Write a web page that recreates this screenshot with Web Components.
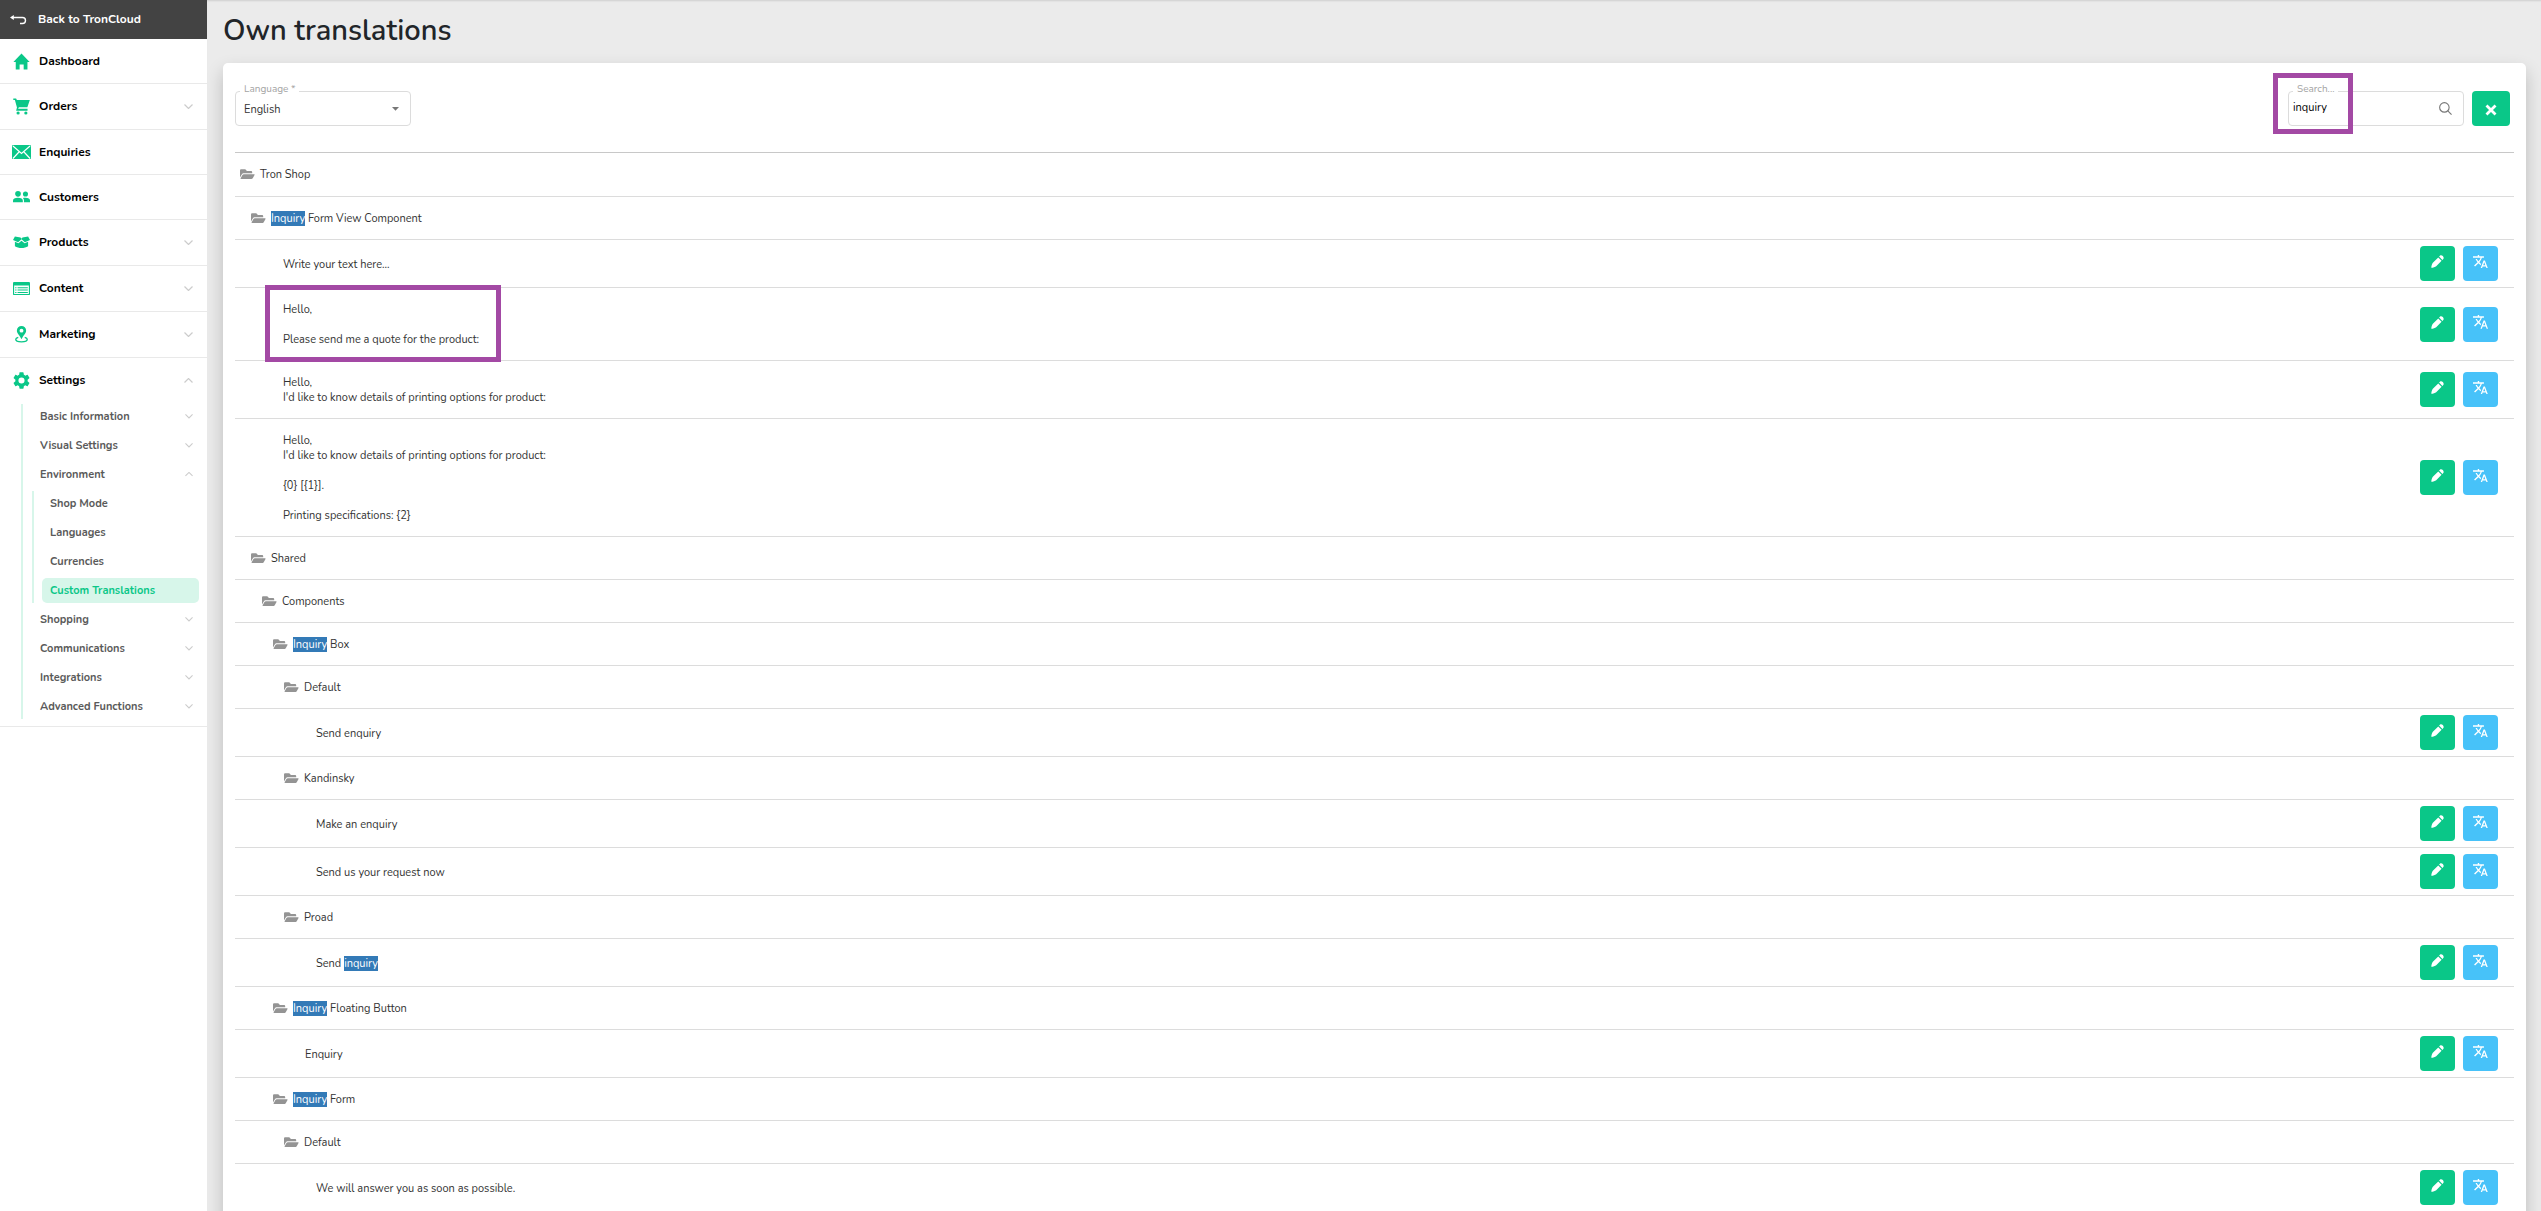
<!DOCTYPE html>
<html lang="en">
<head>
<meta charset="utf-8">
<title>Own translations</title>
<style>
	html, body {
		height: 100%;
		margin: 0;
	}
	body {
		--green: #0ac788;
		--mint: #d7f6ea;
		--blue: #47c2f9;
		--line: #dcdcdc;
		--mark: #a349a4;
		background: #ebebeb;
		color: #333;
		font: 11px/15px Nunito, "Open Sans", sans-serif;
	}
</style>
</head>
<body>
<app-shell>
	<side-nav slot="nav"></side-nav>
	<h1 slot="title">Own translations</h1>
	<filter-bar></filter-bar>
	<translation-table></translation-table>
</app-shell>

<script>
const icons = {
	back: ['0 0 17 10', '<path d="M3 2.5h9.5a3 3 0 0 1 0 6H10" fill="none" stroke="currentColor" stroke-width="1.4"/><path d="M0 2.5 3.8 0v5z"/>'],
	home: ['0 0 18 18', '<path d="M9 .5 17.6 9.6h-2.3v8h-4v-5.4H7v5.4H2.9v-8H.4z"/>'],
	cart: ['0 0 18 18', '<path d="M.3.4h3l.8 1.8h13.7l-2.6 7.6H6.3l-.9 1.7h10v1.9H3.3l.9-3.4L2 2.1H.3z"/><circle cx="5.4" cy="15.9" r="1.7"/><circle cx="13.6" cy="15.9" r="1.7"/>'],
	mail: ['0 0 20 15', '<rect width="20" height="15" rx="1.2"/><path d="m1 1 9 8 9-8M1 14.2l6.6-7.1M19 14.2l-6.6-7.1" fill="none" stroke="#fff" stroke-width="1.2"/>'],
	people: ['0 0 18 12', '<circle cx="5.3" cy="3" r="3"/><circle cx="13.2" cy="3.2" r="2.7"/><path d="M0 12v-1.8C0 8 2 7.1 5.2 7.1s5.2.9 5.2 3.1V12zM11.6 12v-2c0-1.2-.5-2-1.2-2.6.8-.2 1.7-.3 2.8-.3 3 0 4.800.9 4.800 2.900V12z"/>'],
	box: ['0 0 18 13', '<path d="M2 .5 8 1.500 9 2.800l1-1.300 6-1L18 4.300l-5.400 2.200L9 3.400 5.400 6.500 0 4.300z"/><path d="M2 6.200l3.800 1.600L9 5l3.200 2.800L16 6.200v4.700c-2 1.300-4.400 1.900-7 1.900s-5-.6-7-1.900z"/>'],
	content: ['0 0 18 14', '<rect x=".6" y=".6" width="16.800" height="12.800" rx=".8" fill="none" stroke="currentColor" stroke-width="1.2"/><path d="M.6.6h16.800v3H.6zM2.300 5.500h1.400v1.100H2.300zm2.500 0h10.900v1.100H4.800zM2.300 8h1.400v1.100H2.300zm2.500 0h10.900v1.100H4.800zm-2.500 2.500h1.400v1.100H2.300zm2.500 0h10.900v1.100H4.800z"/>'],
	pin: ['0 0 14 18', '<path d="M7 0a5 5 0 0 0-5 5c0 3.300 3.600 5.300 5 9.400C8.400 10.300 12 8.300 12 5a5 5 0 0 0-5-5zm0 2.900a2.100 2.100 0 1 1 0 4.200 2.100 2.100 0 0 1 0-4.200z"/><path d="M3.500 12.200C1.800 12.700.8 13.500.8 14.300c0 1.500 2.800 2.800 6.200 2.800s6.200-1.300 6.200-2.800c0-.8-1-1.600-2.700-2.100" fill="none" stroke="currentColor" stroke-width="1.400"/>'],
	gear: ['2 2 20 20', '<path d="M19.140 12.940c.04-.3.06-.61.06-.94 0-.32-.02-.64-.07-.94l2.030-1.580a.49.49 0 0 0 .12-.61l-1.920-3.320a.488.488 0 0 0-.59-.22l-2.390.96c-.5-.38-1.030-.7-1.620-.94l-.36-2.540a.484.484 0 0 0-.48-.41h-3.840c-.24 0-.43.17-.47.41l-.36 2.540c-.59.24-1.130.57-1.620.94l-2.390-.96c-.22-.08-.47 0-.59.22L2.740 8.870c-.12.21-.08.47.12.61l2.030 1.580c-.05.3-.09.63-.09.94s.02.64.07.94l-2.030 1.580a.49.49 0 0 0-.12.61l1.920 3.320c.12.22.37.29.59.22l2.390-.96c.5.38 1.030.7 1.620.94l.36 2.540c.05.24.24.41.48.41h3.840c.24 0 .44-.17.47-.41l.36-2.540c.59-.24 1.130-.56 1.620-.94l2.390.96c.22.08.47 0 .59-.22l1.920-3.320c.12-.22.07-.47-.12-.61l-2.010-1.580zM12 15.600A3.610 3.610 0 0 1 8.400 12 3.610 3.610 0 0 1 12 8.400a3.610 3.610 0 0 1 3.600 3.600 3.610 3.610 0 0 1-3.600 3.600z"/>'],
	down: ['0 0 9 5', '<path d="M.5.5l4 4 4-4" fill="none" stroke="currentColor" stroke-width="1.200"/>'],
	up: ['0 0 9 5', '<path d="M.5 4.500l4-4 4 4" fill="none" stroke="currentColor" stroke-width="1.200"/>'],
	caret: ['0 0 7 4', '<path d="M0 0h7L3.500 3.800z"/>'],
	search: ['0 0 14 14', '<circle cx="5.800" cy="5.800" r="5.100" fill="none" stroke="currentColor" stroke-width="1.200"/><path d="m9.500 9.500 4 4" stroke="currentColor" stroke-width="1.200"/>'],
	close: ['0 0 12 12', '<path d="M1.500 1.500l9 9m0-9-9 9" stroke="currentColor" stroke-width="2.800"/>'],
	folder: ['0 52 590 408', '<path d="M572.694 292.093L500.270 416.248A63.997 63.997 0 0 1 444.989 448H45.025c-18.523 0-30.064-20.093-20.731-36.093l72.424-124.155A64 64 0 0 1 152 256h399.964c18.523 0 30.064 20.093 20.730 36.093zM152 224h328v-48c0-26.510-21.490-48-48-48H272l-64-64H48C21.490 64 0 85.490 0 112v278.046l69.077-118.418C86.214 242.250 117.989 224 152 224z"/>'],
	pencil: ['0 0 14 14', '<path d="M7.800 2.600 11.400 6.200 5.600 12C4.500 13 2.300 13.500.3 13.700.5 11.700 1 9.500 2 8.400zM8.700 1.700l.9-.9c1.900-1.700 5.300 1.700 3.600 3.600l-.9.9z"/>'],
	translate: ['1 2 22 20', '<path d="M12.870 15.070l-2.540-2.510.03-.03c1.740-1.940 2.980-4.170 3.710-6.530H17V4h-7V2H8v2H1v1.990h11.170C11.500 7.920 10.440 9.750 9 11.350 8.070 10.320 7.300 9.190 6.690 8h-2c.73 1.630 1.730 3.170 2.980 4.560l-5.090 5.020L4 19l5-5 3.110 3.110.76-2.040zM18.500 10h-2L12 22h2l1.120-3h4.750L21 22h2l-4.500-12zm-2.620 7l1.620-4.330L19.120 17h-3.240z"/>']
}

class UiIcon extends HTMLElement {
	constructor() {
		super()
		this.attachShadow({ mode: 'open' })
	}
	connectedCallback() {
		let [box, shapes] = icons[this.getAttribute('name')]
		let width = this.getAttribute('width')
		this.shadowRoot.innerHTML = /* html */ `
		<style>
			:host {
				display: inline-flex;
				flex: none;
			}
			svg {
				display: block;
				height: auto;
				fill: currentColor;
			}
		</style>
		<svg viewBox="${box}" width="${width}" aria-hidden="true">${shapes}</svg>
		`
	}
}
customElements.define('ui-icon', UiIcon)

class AppShell extends HTMLElement {
	constructor() {
		super()
		this.attachShadow({ mode: 'open' })
		this.shadowRoot.innerHTML = /* html */ `
		<style>
			:host {
				display: grid;
				grid-template-columns: 207px minmax(0, 1fr);
				height: 100vh;
				overflow: hidden;
			}
			main {
				padding: 13px 15px 0 16px;
				overflow: hidden;
				box-shadow: inset 0 2px 2px -1px #cfcfcf;
			}
			::slotted(h1) {
				margin: 0 0 14px;
				color: #212529;
				font-size: 29px;
				font-weight: 600;
				line-height: 36px;
			}
			.card {
				padding: 28px 12px;
				background: #fff;
				border-radius: 5px;
				box-shadow: 0 8px 18px rgba(0, 0, 0, .2);
			}
		</style>
		<slot name="nav"></slot>
		<main>
			<slot name="title"></slot>
			<div class="card"><slot></slot></div>
		</main>
		`
	}
}
customElements.define('app-shell', AppShell)

class NavSection extends HTMLElement {
	constructor() {
		super()
		this.attachShadow({ mode: 'open' })
	}
	connectedCallback() {
		let arrow = this.getAttribute('arrow')
		this.shadowRoot.innerHTML = /* html */ `
		<style>
			:host {
				display: block;
				border-bottom: 1px solid #e9e9e9;
			}
			a {
				display: flex;
				align-items: center;
				gap: 8px;
				height: ${arrow ? 45 : 44}px;
				padding: 0 14px 0 12px;
				color: #000;
				font-size: 12px;
				font-weight: 700;
				text-decoration: none;
			}
			.glyph {
				display: flex;
				justify-content: center;
				width: 19px;
				color: var(--green);
			}
			.label {
				flex: 1;
			}
			.arrow {
				color: #ccc;
			}
		</style>
		<a href="#">
			<span class="glyph"><ui-icon name="${this.getAttribute('icon')}" width="${this.getAttribute('size') || 17}"></ui-icon></span>
			<span class="label">${this.getAttribute('label')}</span>
			${arrow ? `<ui-icon class="arrow" name="${arrow}" width="9"></ui-icon>` : ''}
		</a>
		<slot></slot>
		`
	}
}
customElements.define('nav-section', NavSection)

class SideNav extends HTMLElement {
	constructor() {
		super()
		this.attachShadow({ mode: 'open' })
		let item = (label, arrow) => `<li><a href="#">${label}${arrow ? `<ui-icon name="${arrow}" width="8"></ui-icon>` : ''}</a>`
		this.shadowRoot.innerHTML = /* html */ `
		<style>
			:host {
				display: block;
				background: #fff;
			}
			.back {
				display: flex;
				align-items: center;
				gap: 11px;
				height: 39px;
				padding-left: 10px;
				color: #fff;
				background: #434343;
				font-size: 12px;
				font-weight: 700;
				text-decoration: none;
			}
			ul {
				display: flex;
				flex-direction: column;
				gap: 4px;
				margin: 0;
				padding: 0;
				list-style: none;
				border-left: 2px solid var(--mint);
			}
			.sub {
				margin: 1px 0 7px 21px;
			}
			.sub ul {
				margin: 4px 8px 0 9px;
			}
			li a {
				display: flex;
				align-items: center;
				justify-content: space-between;
				height: 25px;
				padding: 0 14px 0 17px;
				color: #5a5a5a;
				font-weight: 700;
				text-decoration: none;
			}
			li li a {
				margin-left: 8px;
				padding: 0 8px;
			}
			.active a {
				color: var(--green);
				background: var(--mint);
				border-radius: 5px;
			}
			li ui-icon {
				color: #ccc;
			}
		</style>
		<a class="back" href="#"><ui-icon name="back" width="17"></ui-icon>Back to TronCloud</a>
		<nav>
			<nav-section label="Dashboard" icon="home"></nav-section>
			<nav-section label="Orders" icon="cart" arrow="down"></nav-section>
			<nav-section label="Enquiries" icon="mail" size="19"></nav-section>
			<nav-section label="Customers" icon="people"></nav-section>
			<nav-section label="Products" icon="box" arrow="down"></nav-section>
			<nav-section label="Content" icon="content" arrow="down"></nav-section>
			<nav-section label="Marketing" icon="pin" size="13" arrow="down"></nav-section>
			<nav-section label="Settings" icon="gear" arrow="up">
				<ul class="sub">
					${item('Basic Information', 'down')}</li>
					${item('Visual Settings', 'down')}</li>
					${item('Environment', 'up')}
						<ul>
							${item('Shop Mode')}</li>
							${item('Languages')}</li>
							${item('Currencies')}</li>
							<li class="active"><a href="#" aria-current="page">Custom Translations</a></li>
						</ul>
					</li>
					${item('Shopping', 'down')}</li>
					${item('Communications', 'down')}</li>
					${item('Integrations', 'down')}</li>
					${item('Advanced Functions', 'down')}</li>
				</ul>
			</nav-section>
		</nav>
		`
	}
}
customElements.define('side-nav', SideNav)

class UiButton extends HTMLElement {
	constructor() {
		super()
		this.attachShadow({ mode: 'open', delegatesFocus: true })
	}
	connectedCallback() {
		this.shadowRoot.innerHTML = /* html */ `
		<style>
			:host {
				display: inline-flex;
			}
			button {
				display: flex;
				align-items: center;
				justify-content: center;
				width: var(--button-width, 35px);
				height: 35px;
				padding: var(--button-padding, 0 0 4px);
				border: 0;
				border-radius: 4px;
				color: #fff;
				background: var(--button-color, var(--green));
				cursor: pointer;
			}
		</style>
		<button type="button" aria-label="${this.getAttribute('label')}"><ui-icon name="${this.getAttribute('icon')}" width="${this.getAttribute('size')}"></ui-icon></button>
		`
	}
}
customElements.define('ui-button', UiButton)

class FilterBar extends HTMLElement {
	constructor() {
		super()
		this.attachShadow({ mode: 'open' })
		this.shadowRoot.innerHTML = /* html */ `
		<style>
			:host {
				display: flex;
				align-items: flex-start;
				justify-content: space-between;
				margin-bottom: 26px;
				padding-right: 4px;
			}
			.right {
				display: flex;
				gap: 8px;
			}
			.field {
				position: relative;
				display: flex;
				align-items: center;
				box-sizing: border-box;
				width: 176px;
				height: 35px;
				border: 1px solid var(--line);
				border-radius: 4px;
			}
			.field label {
				position: absolute;
				top: -10px;
				left: 4px;
				padding: 0 4px;
				color: #a3a3a3;
				background: #fff;
				font-size: 10px;
			}
			.field ui-icon {
				position: absolute;
				right: 11px;
				color: #777;
				pointer-events: none;
			}
			select, input {
				box-sizing: border-box;
				width: 100%;
				height: 100%;
				margin: 0;
				padding: 2px 30px 0 8px;
				border: 0;
				outline: 0;
				appearance: none;
				color: #333;
				background: none;
				font: inherit;
			}
			input {
				padding: 0 36px 2px 4px;
				color: #000;
			}
			.marker {
				position: absolute;
				inset: -19px 110px -9px -16px;
				border: 5px solid var(--mark);
				pointer-events: none;
			}
			ui-button {
				--button-width: 38px;
				--button-padding: 2px 0 0;
			}
		</style>
		<div class="field">
			<select id="language"><option>English</option></select>
			<label for="language">Language *</label>
			<ui-icon name="caret" width="7"></ui-icon>
		</div>
		<div class="right">
			<div class="field">
				<input id="search" type="text" value="inquiry">
				<label for="search">Search...</label>
				<ui-icon name="search" width="13"></ui-icon>
				<div class="marker"></div>
			</div>
			<ui-button icon="close" size="12" label="Clear search"></ui-button>
		</div>
		`
	}
}
customElements.define('filter-bar', FilterBar)

// [depth, text, kind]
const rows = [
	[0, 'Tron Shop', 'folder'],
	[1, 'Inquiry Form View Component', 'folder'],
	[2, 'Write your text here...'],
	[2, 'Hello,\n\nPlease send me a quote for the product:', 'marked'],
	[2, 'Hello,\nI\'d like to know details of printing options for product:'],
	[2, 'Hello,\nI\'d like to know details of printing options for product:\n\n{0} [{1}].\n\nPrinting specifications: {2}'],
	[1, 'Shared', 'folder'],
	[2, 'Components', 'folder'],
	[3, 'Inquiry Box', 'folder'],
	[4, 'Default', 'folder'],
	[5, 'Send enquiry'],
	[4, 'Kandinsky', 'folder'],
	[5, 'Make an enquiry'],
	[5, 'Send us your request now'],
	[4, 'Proad', 'folder'],
	[5, 'Send inquiry'],
	[3, 'Inquiry Floating Button', 'folder'],
	[4, 'Enquiry'],
	[3, 'Inquiry Form', 'folder'],
	[4, 'Default', 'folder'],
	[5, 'We will answer you as soon as possible.']
]

class TranslationTable extends HTMLElement {
	constructor() {
		super()
		this.attachShadow({ mode: 'open' })
		this.shadowRoot.innerHTML = /* html */ `
		<style>
			:host {
				display: block;
			}
			table {
				width: 100%;
				border-spacing: 0;
				border-top: 1px solid #c8c8c8;
			}
			td {
				box-sizing: border-box;
				height: 48px;
				padding: 0;
				border-bottom: 1px solid var(--line);
				vertical-align: middle;
			}
			.folder td {
				height: 43px;
			}
			tr:first-child td {
				height: 44px;
			}
			.name {
				display: flex;
				align-items: center;
				gap: 5px;
				padding-left: calc(5px + var(--depth) * 11px);
			}
			.folder ui-icon {
				color: #949494;
			}
			.text {
				position: relative;
				margin: 14px 0 13px 21px;
				white-space: pre-line;
			}
			.folder .text {
				margin: 0;
			}
			.marked .text::after {
				content: "";
				position: absolute;
				inset: -17px -22px -15px -18px;
				border: 5px solid var(--mark);
				pointer-events: none;
			}
			mark {
				color: #fff;
				background: #337ab7;
			}
			.actions {
				display: flex;
				justify-content: flex-end;
				gap: 8px;
				padding-right: 16px;
			}
			.translate {
				--button-color: var(--blue);
			}
		</style>
		<table><tbody></tbody></table>
		`
		this.shadowRoot.querySelector('tbody').innerHTML = rows.map(row => this.renderRow(...row)).join('')
	}
	renderRow(depth, text, kind = '') {
		let label = text.replace(/inquiry/gi, '<mark>$&</mark>')
		let folder = kind === 'folder'
		return `
		<tr class="${kind}" style="--depth: ${depth}">
			<td${folder ? ' colspan="2"' : ''}><div class="name">${folder ? '<ui-icon name="folder" width="15"></ui-icon>' : ''}<div class="text">${label}</div></div></td>
			${folder ? '' : `<td><div class="actions">
				<ui-button icon="pencil" size="13" label="Edit"></ui-button>
				<ui-button class="translate" icon="translate" size="15" label="Translate"></ui-button>
			</div></td>`}
		</tr>`
	}
}
customElements.define('translation-table', TranslationTable)
</script>
</body>
</html>
